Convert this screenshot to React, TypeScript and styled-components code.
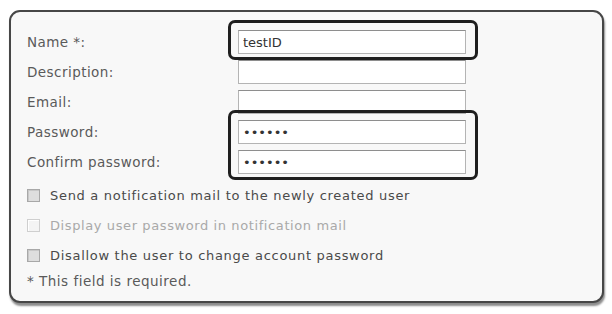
import { Fragment } from 'react';
import styled, { createGlobalStyle } from 'styled-components';

const GlobalStyle = createGlobalStyle`
  html, body {
    margin: 0;
    padding: 0;
    background: #ffffff;
  }
  body {
    font-family: "DejaVu Sans", Verdana, sans-serif;
    width: 612px;
    height: 314px;
    overflow: hidden;
  }
`;

const Page = styled.div`
  padding: 10px 8px 0 9px;
`;

const Panel = styled.div`
  box-sizing: border-box;
  width: 595px;
  height: 293px;
  background: #f8f8f8;
  border: 2px solid #474747;
  border-radius: 11px;
  box-shadow: 1px 3px 2px rgba(0, 0, 0, 0.45);
  padding: 15px 16px 0 16px;
`;

const FieldGrid = styled.div`
  display: grid;
  grid-template-columns: 211px 228px;
  grid-auto-rows: 30px;
  align-items: center;
`;

const Label = styled.label<{ $row: number }>`
  grid-column: 1;
  grid-row: ${(p) => p.$row};
  font-size: 13.5px;
  color: #5a5a5a;
  letter-spacing: 0.45px;
`;

const Input = styled.input<{ $row: number }>`
  grid-column: 2;
  grid-row: ${(p) => p.$row};
  box-sizing: border-box;
  height: 24px;
  width: 228px;
  margin: 0;
  padding: 0 4px;
  border: 1px solid #b4b4b4;
  border-top-color: #8e8e8e;
  background: #ffffff;
  font-family: "DejaVu Sans", Verdana, sans-serif;
  font-size: 13px;
  color: #333333;
  outline: none;
`;

const Frame = styled.div<{ $rows: string }>`
  grid-column: 2;
  grid-row: ${(p) => p.$rows};
  align-self: stretch;
  margin: -7px -12px -3px -10px;
  border: 3px solid #1f1f1f;
  border-radius: 7px;
  pointer-events: none;
  z-index: 1;
`;

const Options = styled.div`
  display: flex;
  flex-direction: column;
  margin-top: 3px;
`;

const OptionRow = styled.label<{ $disabled?: boolean }>`
  display: flex;
  align-items: center;
  gap: 10px;
  height: 30px;
  font-size: 13px;
  color: ${(p) => (p.$disabled ? '#a9a9a9' : '#4a4a4a')};
  letter-spacing: ${(p) => (p.$disabled ? '0.6px' : '0.7px')};
`;

const Box = styled.span<{ $disabled?: boolean }>`
  box-sizing: border-box;
  width: 13px;
  height: 13px;
  flex: none;
  border: 1px solid ${(p) => (p.$disabled ? '#cfcfcf' : '#a8a8a8')};
  background: ${(p) => (p.$disabled ? '#f4f4f4' : '#dedede')};
  box-shadow: inset 1px 1px 0 ${(p) => (p.$disabled ? '#ffffff' : '#c8c8c8')};
`;

const Note = styled.div`
  font-size: 13.5px;
  color: #5a5a5a;
  height: 22px;
  line-height: 22px;
  letter-spacing: 0.5px;
`;

const fields = [
  { label: 'Name *:', value: 'testID', type: 'text' },
  { label: 'Description:', value: '', type: 'text' },
  { label: 'Email:', value: '', type: 'text' },
  { label: 'Password:', value: 'secret', type: 'password' },
  { label: 'Confirm password:', value: 'secret', type: 'password' },
];

const options = [
  { text: 'Send a notification mail to the newly created user', disabled: false },
  { text: 'Display user password in notification mail', disabled: true },
  { text: 'Disallow the user to change account password', disabled: false },
];

export default function App() {
  return (
    <>
      <GlobalStyle />
      <Page>
        <Panel>
          <FieldGrid>
            {fields.map((f, i) => (
              <Fragment key={f.label}>
                <Label $row={i + 1}>{f.label}</Label>
                <Input $row={i + 1} type={f.type} defaultValue={f.value} readOnly />
              </Fragment>
            ))}
            <Frame $rows="1" />
            <Frame $rows="4 / span 2" />
          </FieldGrid>
          <Options>
            {options.map((o) => (
              <OptionRow key={o.text} $disabled={o.disabled}>
                <Box $disabled={o.disabled} />
                {o.text}
              </OptionRow>
            ))}
          </Options>
          <Note>* This field is required.</Note>
        </Panel>
      </Page>
    </>
  );
}
